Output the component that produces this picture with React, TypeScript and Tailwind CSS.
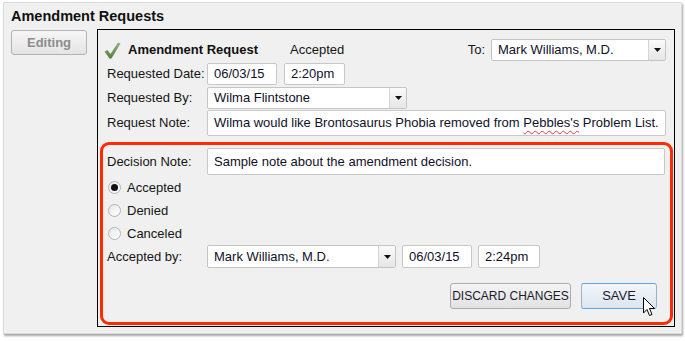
import React from 'react';

const font = { fontFamily: '"Liberation Sans", Arial, sans-serif' };

const Arrow = () => (
  <div className="w-[17px] h-full flex items-center justify-center border-l border-[#d4d4d4] bg-gradient-to-b from-[#fafafa] to-[#e6e6e6] rounded-r-[2px]">
    <svg width="7" height="4" viewBox="0 0 7 4">
      <path d="M0 0H7L3.5 4Z" fill="#111" />
    </svg>
  </div>
);

const Select = ({ value, className }: { value: string; className: string }) => (
  <div className={`shrink-0 flex bg-white border border-[#c4c4c4] rounded-[2px] ${className}`}>
    <div className="flex-1 pl-[6px] flex items-center text-[#10102a]">{value}</div>
    <Arrow />
  </div>
);

const Input = ({ value, className, children }: { value?: string; className: string; children?: React.ReactNode }) => (
  <div className={`shrink-0 flex items-center pl-[6px] bg-white border border-[#c8c8c8] rounded-[2px] text-[#10102a] whitespace-nowrap ${className}`}>
    {children ?? value}
  </div>
);

const Label = ({ text }: { text: string }) => <div className="shrink-0 w-[100px] text-[#151515]">{text}</div>;

const Radio = ({ label, checked }: { label: string; checked?: boolean }) => (
  <div className="h-[23px] flex items-center pl-[1px] gap-[6px]">
    <div className="w-[13px] h-[13px] rounded-full border border-[#b4b4b4] bg-gradient-to-br from-[#e8e8e8] to-white flex items-center justify-center">
      {checked && <div className="w-[7px] h-[7px] rounded-full bg-[#111]" />}
    </div>
    <span className="text-[#151515]">{label}</span>
  </div>
);

const App = () => {
  return (
    <div className="w-[685px] h-[341px] bg-white text-[13px] overflow-hidden" style={font}>
      <div className="ml-[3px] mt-[2px] w-[679px] h-[332px] bg-[#f0f0f0] border border-[#dadada] shadow-[1px_2px_2px_rgba(0,0,0,0.35)]">
        <div className="h-[26px] pl-[7px] pt-[4px] text-[14.5px] leading-[18px] font-bold text-[#111]">Amendment Requests</div>
        <div className="flex pl-[7px] gap-[10px]">
          <div className="mt-[1px] w-[76px] h-[25px] rounded-[3px] border border-[#b2b2b2] bg-gradient-to-b from-[#f6f6f6] to-[#e4e4e4] flex items-center justify-center font-bold text-[#8c8c8c]">
            Editing
          </div>
          <div className="relative w-[578px] h-[298px] border border-black">
            <div className="mt-[9px] h-[22px] flex items-center pl-[6px] pr-[8px]">
              <svg width="17" height="17" viewBox="0 0 17 17" className="mr-[7px]">
                <defs>
                  <linearGradient id="ck" x1="0" y1="0" x2="0" y2="1">
                    <stop offset="0" stopColor="#8fb67a" />
                    <stop offset="1" stopColor="#527e42" />
                  </linearGradient>
                </defs>
                <path d="M0.5 9.5 L3.5 8 L6.5 12 L14 0.5 L16.5 1.5 L7.5 16.5 L5.5 16.5 Z" fill="url(#ck)" />
              </svg>
              <div className="w-[162px] font-bold text-[#111]">Amendment Request</div>
              <div className="flex-1 text-[#151515]">Accepted</div>
              <div className="mr-[6px] text-[#151515]">To:</div>
              <Select value="Mark Williams, M.D." className="w-[175px] h-[22px]" />
            </div>
            <div className="mt-[2px] h-[22px] flex items-center pl-[9px]">
              <Label text="Requested Date:" />
              <Input value="06/03/15" className="w-[70px] h-[22px]" />
              <Input value="2:20pm" className="ml-[7px] w-[61px] h-[22px]" />
            </div>
            <div className="mt-[1px] h-[23px] flex items-center pl-[9px]">
              <Label text="Requested By:" />
              <Select value="Wilma Flintstone" className="w-[200px] h-[22px]" />
            </div>
            <div className="mt-[1px] h-[26px] flex items-center pl-[9px]">
              <Label text="Request Note:" />
              <Input className="w-[459px] h-[26px]">
                <span>
                  Wilma would like Brontosaurus Phobia removed from{' '}
                  <span className="underline decoration-wavy decoration-[#e23a3a] decoration-1 underline-offset-[3px]">Pebbles's</span>{' '}
                  Problem List.
                </span>
              </Input>
            </div>
            <div className="mt-[6px] ml-[2px] w-[573px] h-[183px] border-[3px] border-[#ff2a00] rounded-[9px] pl-[4px] pr-[5px]">
              <div className="mt-[3px] h-[27px] flex items-center">
                <Label text="Decision Note:" />
                <Input value="Sample note about the amendment decision." className="w-[458px] h-[27px]" />
              </div>
              <div className="mt-[1px]">
                <Radio label="Accepted" checked />
                <Radio label="Denied" />
                <Radio label="Canceled" />
              </div>
              <div className="h-[23px] flex items-center">
                <Label text="Accepted by:" />
                <Select value="Mark Williams, M.D." className="w-[189px] h-[23px]" />
                <Input value="06/03/15" className="ml-[6px] w-[70px] h-[23px]" />
                <Input value="2:24pm" className="ml-[6px] w-[62px] h-[23px]" />
              </div>
              <div className="mt-[15px] mr-[8px] flex justify-end gap-[10px] whitespace-nowrap">
                <div className="w-[121px] h-[26px] rounded-[3px] border border-[#acacac] bg-gradient-to-b from-[#f4f4f4] to-[#e2e2e2] flex items-center justify-center text-[12px] text-[#1a1a2a]">
                  DISCARD CHANGES
                </div>
                <div className="w-[76px] h-[26px] rounded-[3px] border border-[#9ab2cc] border-t-[#5aa8f0] border-b-[#5aa8f0] bg-gradient-to-b from-[#f2f6fa] to-[#dde5ee] flex items-center justify-center text-[#1a1a2a]">
                  SAVE
                </div>
              </div>
            </div>
            <svg width="13" height="21" viewBox="0 0 13 21" className="absolute left-[545px] top-[267px]">
              <path d="M0.5 0.5 L0.5 16 L4 12.5 L6.5 18.5 L9 17.5 L6.5 11.5 L11.5 11.5 Z" fill="white" stroke="black" strokeWidth="1" strokeLinejoin="miter" />
            </svg>
          </div>
        </div>
      </div>
    </div>
  );
};

export default App;
